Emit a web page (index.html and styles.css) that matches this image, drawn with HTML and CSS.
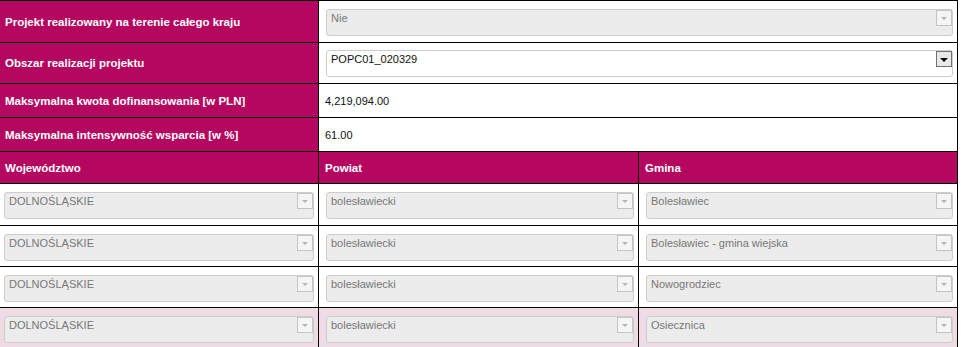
FILE: index.html
```html
<!DOCTYPE html>
<html lang="pl">
<head>
  <meta charset="UTF-8">
  <title>Obszar realizacji projektu</title>
  <link rel="stylesheet" href="styles.css">
</head>
<body>
  <div class="form-table">
    <!-- Dane ogolne -->
    <div class="label r1">Projekt realizowany na terenie całego kraju</div>
    <div class="value wide r1">
      <div class="select disabled"><span class="select-text">Nie</span><span class="select-btn"></span></div>
    </div>

    <div class="label">Obszar realizacji projektu</div>
    <div class="value wide">
      <div class="select"><span class="select-text">POPC01_020329</span><span class="select-btn"></span></div>
    </div>

    <div class="label">Maksymalna kwota dofinansowania [w PLN]</div>
    <div class="value wide text">4,219,094.00</div>

    <div class="label">Maksymalna intensywność wsparcia [w %]</div>
    <div class="value wide text">61.00</div>

    <!-- Lista gmin -->
    <div class="label head">Województwo</div>
    <div class="label head">Powiat</div>
    <div class="label head">Gmina</div>
  </div>
  <div class="form-table area" id="area-rows"></div>

  <script>
    const areas = [
      { woj: "DOLNOŚLĄSKIE", powiat: "bolesławiecki", gmina: "Bolesławiec" },
      { woj: "DOLNOŚLĄSKIE", powiat: "bolesławiecki", gmina: "Bolesławiec - gmina wiejska" },
      { woj: "DOLNOŚLĄSKIE", powiat: "bolesławiecki", gmina: "Nowogrodziec" },
      { woj: "DOLNOŚLĄSKIE", powiat: "bolesławiecki", gmina: "Osiecznica" }
    ];

    const rows = document.getElementById("area-rows");

    areas.forEach((area, i) => {
      [area.woj, area.powiat, area.gmina].forEach(name => {
        const cell = document.createElement("div");
        cell.className = "value" + (i === areas.length - 1 ? " hover" : "");
        cell.innerHTML = `<div class="select disabled"><span class="select-text">${name}</span><span class="select-btn"></span></div>`;
        rows.appendChild(cell);
      });
    });
  </script>
</body>
</html>
```

FILE: styles.css
```css
body {
  margin: 0;
  font-family: "Liberation Sans", Arial, sans-serif;
  font-size: 11px;
  background: #fff;
  overflow: hidden;
}
.form-table {
  display: grid;
  grid-template-columns: 321px 319px 318px;
  grid-template-rows: 41px 40px 33px 33px 32px;
  gap: 1px;
  padding: 1px 1px 0 1px;
  margin-left: -4px;
  width: 960px;
  background: #000;
}
.form-table.area {
  grid-template-rows: 41px 40px 40px 40px;
  padding-top: 0;
}
.label {
  background: #b4075f;
  color: #fff;
  font-weight: bold;
  font-size: 11.5px;
  padding: 0 8px;
  display: flex;
  align-items: center;
}
.label.head {
  border-bottom: 1px solid #000;
}
.label.head + .label.head {
  padding-left: 6px;
}
.value {
  background: #fff;
  padding: 7px 4px 0 7px;
}
.value.r1 {
  padding-top: 8px;
}
.form-table.area .value {
  padding-top: 8px;
}
.value.wide {
  grid-column: span 2;
}
.value.text {
  padding: 0 6px;
  display: flex;
  align-items: center;
  color: #111;
}
.value.hover {
  background: #efdbe3;
}
.select {
  display: flex;
  align-items: flex-start;
  height: 27px;
  box-sizing: border-box;
  border: 1px solid #cdcdcd;
  border-radius: 3px;
  background: #fff;
  color: #111;
}
.select.disabled {
  background: #ececec;
  color: #777;
}
.select-text {
  flex: 1;
  padding: 2px 4px;
  white-space: nowrap;
  overflow: hidden;
}
.select-btn {
  position: relative;
  width: 16px;
  height: 16px;
  box-sizing: border-box;
  border: 1px solid #707070;
  background: #e8e8e8;
}
.select-btn::after {
  content: "";
  position: absolute;
  left: 3px;
  top: 6px;
  border-left: 4px solid transparent;
  border-right: 4px solid transparent;
  border-top: 4px solid #000;
}
.select.disabled .select-btn {
  border-color: #c4c4c4;
  background: #f5f5f5;
}
.select.disabled .select-btn::after {
  border-top-color: #b5b5b5;
  border-top-width: 3px;
  left: 4px;
  border-left-width: 3px;
  border-right-width: 3px;
}
```
